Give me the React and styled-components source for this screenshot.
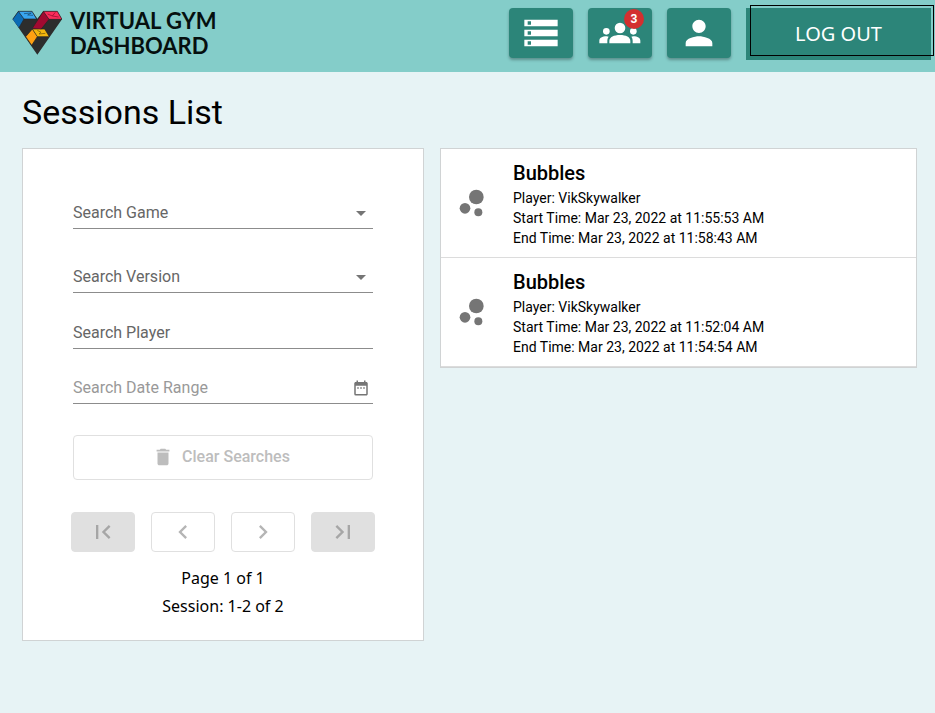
import React from "react";
import styled, { createGlobalStyle } from "styled-components";
import {
  MdArrowDropDown,
  MdChevronLeft,
  MdChevronRight,
  MdDateRange,
  MdDelete,
  MdFirstPage,
  MdLastPage,
  MdPerson,
  MdStorage,
} from "react-icons/md";

const GlobalStyle = createGlobalStyle`
  * { box-sizing: border-box; }
  body {
    margin: 0;
    background: #e7f3f5;
    color: #000;
    font-family: Roboto, "Liberation Sans", sans-serif;
    font-size: 16px;
  }
`;

const Header = styled.header`
  display: flex;
  align-items: flex-start;
  justify-content: space-between;
  height: 72px;
  padding: 8px 4px 0 12px;
  background: #84cdc9;
`;

const Brand = styled.a`
  display: flex;
  gap: 8px;
  color: #06100f;
  text-decoration: none;
`;

const BrandMark = styled.svg`
  width: 50px;
  height: 48px;
`;

const BrandName = styled.span`
  display: flex;
  flex-direction: column;
  font-family: Lato, sans-serif;
  font-size: 22px;
  font-weight: 700;
  line-height: 25px;
`;

const Actions = styled.nav`
  display: flex;
  gap: 15px;
`;

const IconButton = styled.button`
  position: relative;
  display: flex;
  align-items: center;
  justify-content: center;
  width: 64px;
  height: 50px;
  padding: 0;
  border: 0;
  border-radius: 4px;
  background: #2c8579;
  color: #fff;
  font-size: 40px;
  box-shadow: 0 2px 3px rgba(0, 0, 0, 0.3);
`;

const GroupSvg = styled.svg`
  width: 42px;
  height: 22px;
`;

const Badge = styled.span`
  position: absolute;
  top: 1px;
  right: 8px;
  width: 20px;
  height: 20px;
  border-radius: 10px;
  background: #d32f2f;
  font-family: Roboto, sans-serif;
  font-size: 12px;
  font-weight: 700;
  line-height: 20px;
  text-align: center;
`;

const LogoutButton = styled.button`
  position: relative;
  width: 185px;
  height: 52px;
  padding: 0 0 2px;
  border: 0;
  background: #2c8579;
  color: #fff;
  font-family: "Noto Sans", sans-serif;
  font-size: 20px;

  &::after {
    content: "";
    position: absolute;
    inset: -3px -3px 4px 4px;
    border: 1px solid #000;
  }
`;

const Main = styled.main`
  padding: 20px 18px 20px 22px;
`;

const Title = styled.h1`
  margin: 0 0 16px;
  font-size: 34px;
  font-weight: 400;
  line-height: 40px;
`;

const Columns = styled.div`
  display: grid;
  grid-template-columns: 402px minmax(0, 1fr);
  align-items: start;
  gap: 16px;
`;

const Filters = styled.section`
  padding: 48px 50px 20px;
  border: 1px solid #d0d3d4;
  background: #fff;
`;

const Field = styled.label`
  position: relative;
  display: flex;
  align-items: center;
  height: 32px;
  margin-bottom: ${(p) => p.$gap}px;
  border-bottom: 1px solid #8c8c8c;
  color: #666;
`;

const Select = styled.select`
  appearance: none;
  width: 100%;
  padding: 0;
  border: 0;
  background: transparent;
  color: #666;
  font: inherit;
`;

const Input = styled.input`
  width: 100%;
  padding: 0;
  border: 0;
  background: transparent;
  font: inherit;

  &::placeholder {
    color: ${(p) => (p.$faint ? "#999" : "#666")};
    opacity: 1;
  }
`;

const FieldIcon = styled.span`
  position: absolute;
  right: 0;
  display: flex;
  justify-content: center;
  width: 24px;
  color: #757575;
  font-size: ${(p) => p.$size}px;
  pointer-events: none;
`;

const ClearButton = styled.button`
  display: flex;
  align-items: center;
  justify-content: center;
  gap: 8px;
  width: 100%;
  height: 45px;
  margin-bottom: 32px;
  padding: 0 4px 2px 0;
  border: 1px solid #e0e0e0;
  border-radius: 4px;
  background: #fff;
  color: #bdbdbd;
  font-family: Roboto, sans-serif;
  font-size: 16px;
  font-weight: 500;

  svg {
    font-size: 22px;
  }
`;

const Pager = styled.div`
  display: flex;
  justify-content: center;
  gap: 16px;
  margin: 0 -2px 12px;
`;

const PageButton = styled.button`
  display: flex;
  align-items: center;
  justify-content: center;
  width: 64px;
  height: 40px;
  padding: 0;
  border: 1px solid #e0e0e0;
  border-radius: 4px;
  background: ${(p) => (p.$filled ? "#e0e0e0" : "#fff")};
  color: ${(p) => (p.$filled ? "#a6a6a6" : "#b5b5b5")};
  font-size: 28px;
`;

const PageInfo = styled.p`
  margin: 0;
  font-family: "Noto Sans", sans-serif;
  line-height: 28px;
  text-align: center;
`;

const SessionList = styled.ul`
  margin: 0;
  padding: 0;
  border: 1px solid #d0d3d4;
  background: #fff;
  list-style: none;
`;

const Session = styled.li`
  display: flex;
  align-items: center;
  gap: 23px;
  height: 109px;
  padding: 0 13px;
  border-bottom: 1px solid #dcdcdc;
`;

const BubbleSvg = styled.svg`
  flex: none;
  width: 36px;
  height: 36px;
`;

const SessionName = styled.h2`
  margin: 0;
  font-size: 20px;
  font-weight: 500;
  line-height: 30px;
`;

const SessionLine = styled.p`
  margin: 0;
  font-size: 14px;
  line-height: 20px;
`;

const sessions = [
  { game: "Bubbles", player: "VikSkywalker", start: "Mar 23, 2022 at 11:55:53 AM", end: "Mar 23, 2022 at 11:58:43 AM" },
  { game: "Bubbles", player: "VikSkywalker", start: "Mar 23, 2022 at 11:52:04 AM", end: "Mar 23, 2022 at 11:54:54 AM" },
];

function Logo() {
  return (
    <BrandMark viewBox="36 24 150 144" aria-hidden="true">
      <path d="M38 58 L55 34 H96 L112 56 L130 34 H172 L186 58 L112 164 Z" fill="#2d2d2d" />
      <path d="M38 58 L55 34 L72 57 L57 83 Z" fill="#0b6bb5" />
      <path d="M55 34 H96 L110 57 H72 Z" fill="#38a5f0" />
      <path d="M72 41 L94 39 L83 45 L99 46" fill="none" stroke="#174566" strokeWidth="2" />
      <path d="M130 34 L147 58 L123 88 L97 85 Z" fill="#a10a31" />
      <path d="M130 34 H172 L186 58 H147 Z" fill="#fb2c5b" />
      <path d="M166 37 L157 48 L176 51 M157 48 L143 42" fill="none" stroke="#850a2a" strokeWidth="2" />
      <path d="M97 87 L112 110 L95 136 L77 110 Z" fill="#ffa012" />
      <path d="M97 87 H134 L148 110 H112 Z" fill="#f3b60e" />
      <path d="M112 91 L123 97 L117 102 L136 100" fill="none" stroke="#6b5209" strokeWidth="2" />
      <path
        d="M38 58 L55 34 H96 L110 57 H72 L57 83 M55 34 L72 57 M97 85 L130 34 H172 L186 58 H147 L123 88 M130 34 L147 58 M97 87 H134 L148 110 H112 L95 136 L77 110 L97 87 L112 110"
        fill="none"
        stroke="#242424"
        strokeWidth="2"
      />
    </BrandMark>
  );
}

function GroupIcon() {
  return (
    <GroupSvg viewBox="311 67 126 66" fill="currentColor" aria-hidden="true">
      <circle cx="374" cy="85" r="16" />
      <circle cx="333" cy="95" r="10" />
      <circle cx="414" cy="95" r="10" />
      <path d="M342 131 V124 C342 112 356 106 374 106 C392 106 405 112 405 124 V131 Z" />
      <path d="M312 131 V123 C312 115 320 110 334 110 L340 111 C337 115 336 119 336 124 V131 Z" />
      <path d="M435 131 V123 C435 115 427 110 414 110 L408 111 C411 115 412 119 412 124 V131 Z" />
    </GroupSvg>
  );
}

function BubbleIcon() {
  return (
    <BubbleSvg viewBox="0 0 108 108" fill="#757575" aria-hidden="true">
      <circle cx="67" cy="36" r="22" />
      <circle cx="33" cy="70" r="16" />
      <circle cx="73" cy="82" r="12" />
    </BubbleSvg>
  );
}

export default function App() {
  return (
    <>
      <GlobalStyle />
      <Header>
        <Brand href="#">
          <Logo />
          <BrandName>
            <span>VIRTUAL GYM</span>
            <span>DASHBOARD</span>
          </BrandName>
        </Brand>
        <Actions>
          <IconButton aria-label="Sessions"><MdStorage /></IconButton>
          <IconButton aria-label="Groups"><GroupIcon /><Badge>3</Badge></IconButton>
          <IconButton aria-label="Profile"><MdPerson /></IconButton>
          <LogoutButton>LOG OUT</LogoutButton>
        </Actions>
      </Header>
      <Main>
        <Title>Sessions List</Title>
        <Columns>
          <Filters>
            <Field $gap={32}>
              <Select aria-label="Search Game"><option>Search Game</option></Select>
              <FieldIcon $size={24}><MdArrowDropDown /></FieldIcon>
            </Field>
            <Field $gap={24}>
              <Select aria-label="Search Version"><option>Search Version</option></Select>
              <FieldIcon $size={24}><MdArrowDropDown /></FieldIcon>
            </Field>
            <Field $gap={23}>
              <Input aria-label="Search Player" placeholder="Search Player" />
            </Field>
            <Field $gap={31}>
              <Input $faint aria-label="Search Date Range" placeholder="Search Date Range" />
              <FieldIcon $size={18}><MdDateRange /></FieldIcon>
            </Field>
            <ClearButton disabled><MdDelete />Clear Searches</ClearButton>
            <Pager>
              <PageButton $filled disabled aria-label="First page"><MdFirstPage /></PageButton>
              <PageButton disabled aria-label="Previous page"><MdChevronLeft /></PageButton>
              <PageButton disabled aria-label="Next page"><MdChevronRight /></PageButton>
              <PageButton $filled disabled aria-label="Last page"><MdLastPage /></PageButton>
            </Pager>
            <PageInfo>Page 1 of 1</PageInfo>
            <PageInfo>Session: 1-2 of 2</PageInfo>
          </Filters>
          <SessionList>
            {sessions.map((s) => (
              <Session key={s.start}>
                <BubbleIcon />
                <div>
                  <SessionName>{s.game}</SessionName>
                  <SessionLine>Player: {s.player}</SessionLine>
                  <SessionLine>Start Time: {s.start}</SessionLine>
                  <SessionLine>End Time: {s.end}</SessionLine>
                </div>
              </Session>
            ))}
          </SessionList>
        </Columns>
      </Main>
    </>
  );
}
